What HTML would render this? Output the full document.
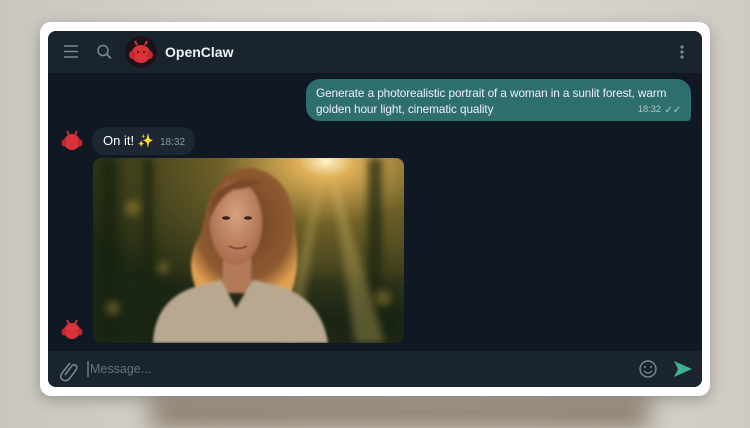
<!DOCTYPE html>
<html><head><meta charset="utf-8"><style>
*{margin:0;padding:0;box-sizing:border-box}
body{width:750px;height:418px;overflow:hidden;font-family:"Liberation Sans",sans-serif;
background:linear-gradient(90deg,#c9c5bf 0%,#d6d2cb 30%,#dcd8d1 60%,#cfcbc4 100%);position:relative}
.bgb{position:absolute;left:150px;top:398px;width:500px;height:30px;background:#8a7a68;filter:blur(12px)}
.frame{position:absolute;left:40px;top:22px;width:670px;height:374px;background:#fff;border-radius:11px;box-shadow:0 4px 14px rgba(0,0,0,.25)}
.app{position:absolute;left:48px;top:31px;width:654px;height:356px;background:#101923;border-radius:8px;overflow:hidden}
.hdr{position:absolute;left:0;top:0;width:654px;height:42px;background:#19242f}
.in{position:absolute;left:0;top:320px;width:654px;height:36px;background:#19242f}
.t{position:absolute;white-space:nowrap}
.bub{position:absolute;left:258px;top:48px;width:385px;height:42px;background:#2e6e6c;border-radius:14px 14px 4px 14px;color:#eef;font-size:11.8px;line-height:16px;padding:6px 10px;white-space:nowrap;letter-spacing:-0.1px}
.b2{position:absolute;left:44px;top:96px;width:103px;height:28px;background:#1c2733;border-radius:13px;color:#fff}
</style></head><body>
<div class="bgb"></div>
<div class="frame"></div>
<div class="app">
 <div class="hdr">
  <svg width="654" height="42" style="position:absolute;left:0;top:0">
   <g stroke="#7d8896" stroke-width="1.6"><line x1="16" y1="15" x2="30" y2="15"/><line x1="16" y1="20.5" x2="30" y2="20.5"/><line x1="16" y1="26" x2="30" y2="26"/></g>
   <circle cx="55" cy="19.5" r="5" fill="none" stroke="#7d8896" stroke-width="1.5"/><line x1="59" y1="23.5" x2="63" y2="27.5" stroke="#7d8896" stroke-width="1.6"/>
   <circle cx="93" cy="21" r="16" fill="#1a1418"/>
   <ellipse cx="93" cy="23" rx="9.5" ry="9" fill="#d9323a"/>
   <ellipse cx="84" cy="24" rx="3" ry="4" fill="#c4282f"/><ellipse cx="102" cy="24" rx="3" ry="4" fill="#c4282f"/>
   <line x1="89" y1="14" x2="87" y2="10" stroke="#d9323a" stroke-width="2"/><line x1="97" y1="14" x2="99" y2="10" stroke="#d9323a" stroke-width="2"/>
   <circle cx="90" cy="21" r="1" fill="#400"/><circle cx="96" cy="21" r="1" fill="#400"/>
   <g fill="#7d8896"><circle cx="634" cy="16" r="1.6"/><circle cx="634" cy="21" r="1.6"/><circle cx="634" cy="26" r="1.6"/></g>
  </svg>
  <div class="t" style="left:117px;top:13px;color:#eef2f6;font-weight:bold;font-size:14px">OpenClaw</div>
 </div>
 <div class="bub">Generate a photorealistic portrait of a woman in a sunlit forest, warm<br>golden hour light, cinematic quality
  <div class="t" style="right:30px;bottom:3px;font-size:9.5px;color:#a9c9c6">18:32</div>
  <div class="t" style="right:10px;bottom:2px;font-size:10px;color:#9fd1c6">✓✓</div>
 </div>
 <svg width="40" height="356" style="position:absolute;left:0;top:0">
  <g id="bot"><ellipse cx="24" cy="111" rx="8" ry="8" fill="#d9323a"/><ellipse cx="16" cy="112" rx="2.5" ry="3.5" fill="#c4282f"/><ellipse cx="32" cy="112" rx="2.5" ry="3.5" fill="#c4282f"/><line x1="21" y1="104" x2="19" y2="100" stroke="#d9323a" stroke-width="1.8"/><line x1="27" y1="104" x2="29" y2="100" stroke="#d9323a" stroke-width="1.8"/></g>
  <use href="#bot" y="189"/>
 </svg>
 <div class="b2"><div class="t" style="left:11px;top:6px;font-size:13px">On it! ✨</div><div class="t" style="left:68px;top:10px;font-size:10px;color:#8e99a6">18:32</div></div>
 <svg width="311" height="185" style="position:absolute;left:45px;top:127px;border-radius:8px">
  <defs>
   <radialGradient id="sun" cx="0.75" cy="0.02" r="0.85"><stop offset="0" stop-color="#fff4cc"/><stop offset="0.1" stop-color="#e0b058"/><stop offset="0.4" stop-color="#6e6028"/><stop offset="1" stop-color="#1e2814"/></radialGradient>
   <radialGradient id="hair" cx="0.5" cy="0.45" r="0.6"><stop offset="0" stop-color="#6e4226"/><stop offset="0.75" stop-color="#8e5a30"/><stop offset="1" stop-color="#e0a050"/></radialGradient>
   <radialGradient id="face" cx="0.5" cy="0.4" r="0.6"><stop offset="0" stop-color="#d8a07c"/><stop offset="1" stop-color="#a86c4c"/></radialGradient>
   <filter id="bl"><feGaussianBlur stdDeviation="4"/></filter>
   <filter id="bl1"><feGaussianBlur stdDeviation="1.2"/></filter>
  </defs>
  <rect width="311" height="185" fill="url(#sun)"/>
  <g fill="#182010" opacity=".7" filter="url(#bl)"><rect x="8" y="0" width="16" height="185"/><rect x="50" y="0" width="10" height="185"/><rect x="275" y="0" width="14" height="185"/><rect x="0" y="120" width="311" height="65" opacity=".5"/></g>
  <g fill="#d8b040" opacity=".35" filter="url(#bl)"><circle cx="40" cy="50" r="8"/><circle cx="20" cy="150" r="7"/><circle cx="290" cy="140" r="8"/><circle cx="70" cy="110" r="6"/></g>
  <g fill="#f0d070" opacity=".3" filter="url(#bl)"><polygon points="232,0 205,185 185,185"/><polygon points="236,0 262,185 292,185"/></g>
  <g filter="url(#bl1)">
  <path d="M115 45 Q130 8 160 10 Q200 18 202 70 Q208 110 198 135 L105 135 Q90 105 108 75 Z" fill="url(#hair)"/>
  <rect x="130" y="95" width="28" height="40" fill="#b47a58"/>
  <ellipse cx="143" cy="65" rx="26" ry="42" fill="url(#face)"/>
  <path d="M60 185 Q62 140 105 128 L128 122 L143 150 L160 122 L185 128 Q228 140 235 185 Z" fill="#b7a88f"/>
  <path d="M118 42 Q138 14 170 24 Q160 30 140 32 Q124 42 117 62 Z" fill="#7a4a2a"/>
  </g>
  <g fill="#3a2418"><ellipse cx="133" cy="60" rx="4" ry="1.8"/><ellipse cx="155" cy="60" rx="4" ry="1.8"/></g>
  <path d="M136 88 Q145 93 154 88" stroke="#8a4a40" stroke-width="2" fill="none"/>
 </svg>
 <div class="in">
  <svg width="654" height="36" style="position:absolute;left:0;top:0">
   <path d="M22 12 L14 22 Q11 27 15 29 Q19 31 22 27 L28 19 Q30 15 27 14 Q25 13 23 16 L17 24" fill="none" stroke="#7d8896" stroke-width="1.5"/>
   <line x1="40" y1="10" x2="40" y2="26" stroke="#9aa5b1" stroke-width="1"/>
   <circle cx="600" cy="18" r="8" fill="none" stroke="#7d8896" stroke-width="1.4"/><circle cx="597" cy="16" r="1" fill="#7d8896"/><circle cx="603" cy="16" r="1" fill="#7d8896"/><path d="M596 20 Q600 24 604 20" fill="none" stroke="#7d8896" stroke-width="1.2"/>
   <path d="M626 10 L644 18 L626 26 L630 18 Z" fill="#3fb08f"/>
  </svg>
  <div class="t" style="left:42px;top:11px;font-size:12.5px;color:#66727f">Message...</div>
 </div>
</div>
</body></html>
